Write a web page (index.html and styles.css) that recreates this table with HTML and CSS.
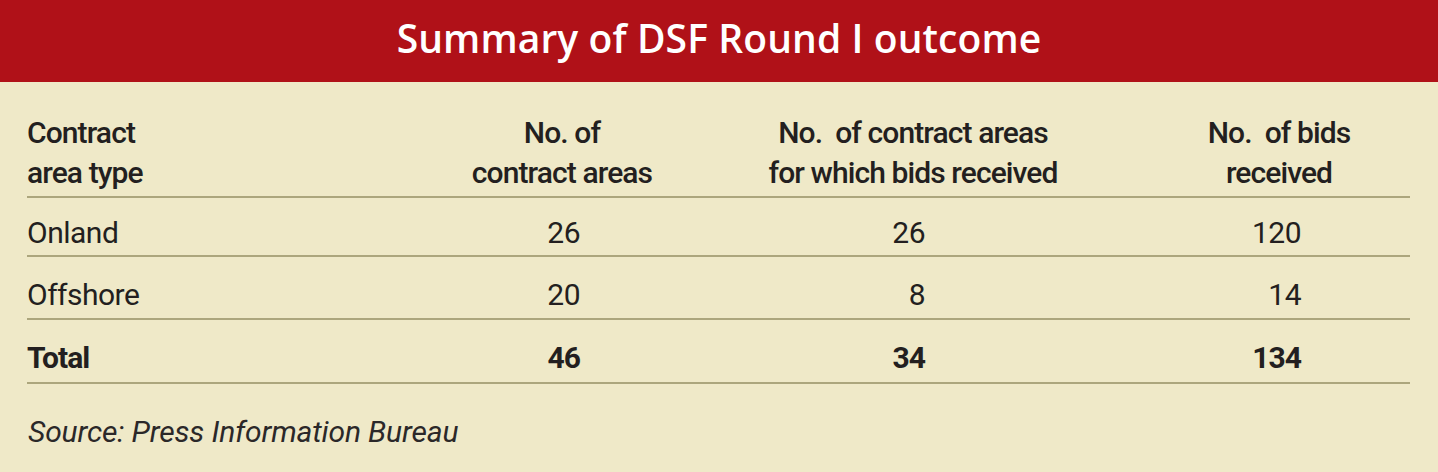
FILE: index.html
```html
<!DOCTYPE html>
<html lang="en">
<head>
<meta charset="utf-8">
<title>Summary of DSF Round I outcome</title>
<link rel="stylesheet" href="styles.css">
</head>
<body>
<div class="panel">
  <header class="band"><h1 class="title">Summary of DSF Round I outcome</h1></header>
  <div class="table">
    <div class="row head">
      <div class="cell first">Contract<br>area type</div>
      <div class="cell c2">No. of<br>contract areas</div>
      <div class="cell c3">No.&nbsp; of contract areas<br>for which bids received</div>
      <div class="cell c4">No.&nbsp; of bids<br>received</div>
    </div>
    <div class="row body r1">
      <div class="cell first">Onland</div>
      <div class="cell num n2">26</div>
      <div class="cell num n3">26</div>
      <div class="cell num n4">120</div>
    </div>
    <div class="row body r2">
      <div class="cell first">Offshore</div>
      <div class="cell num n2">20</div>
      <div class="cell num n3">8</div>
      <div class="cell num n4">14</div>
    </div>
    <div class="row body total">
      <div class="cell first">Total</div>
      <div class="cell num n2">46</div>
      <div class="cell num n3">34</div>
      <div class="cell num n4">134</div>
    </div>
  </div>
  <p class="source">Source: Press Information Bureau</p>
</div>
</body>
</html>
```

FILE: styles.css
```css
html, body {
  margin: 0;
  padding: 0;
  background: #efe9c8;
}
.panel {
  width: 1438px;
  height: 472px;
  background: #efe9c8;
  overflow: hidden;
}
.band {
  background: #b01118;
  height: 82px;
  box-sizing: border-box;
  padding-bottom: 6px;
  display: flex;
  justify-content: center;
}
.title {
  margin: 0;
  font-family: "Open Sans", "DejaVu Sans", sans-serif;
  font-weight: 600;
  font-size: 39px;
  line-height: 76px;
  letter-spacing: 0.1px;
  color: #ffffff;
}
.table {
  margin: 0 28px 0 27px;
  font-family: Roboto, "Liberation Sans", sans-serif;
  font-size: 30px;
  line-height: 40px;
  color: #231f20;
}
.row {
  display: grid;
  grid-template-columns: 419px 232px 470px 262px;
  border-bottom: 2px solid #aca67d;
}
.head {
  padding-top: 31px;
  padding-bottom: 3px;
  font-weight: 500;
  letter-spacing: -0.9px;
}
.head .c2, .head .c3, .head .c4 {
  text-align: center;
}
.body {
  letter-spacing: -0.5px;
}
.r1 {
  padding-top: 15px;
  padding-bottom: 2px;
}
.r2 {
  padding-top: 18px;
  padding-bottom: 3px;
}
.total {
  padding-top: 18px;
  padding-bottom: 4px;
  font-weight: 700;
  letter-spacing: -1px;
}
.num {
  text-align: right;
}
.n2 { padding-right: 98px; }
.n3 { padding-right: 223px; }
.n4 { padding-right: 109px; }
.source {
  margin: 28px 0 0 28px;
  font-family: Roboto, "Liberation Sans", sans-serif;
  font-style: italic;
  font-size: 30px;
  line-height: 40px;
  letter-spacing: -0.15px;
  color: #2b2829;
}
```
